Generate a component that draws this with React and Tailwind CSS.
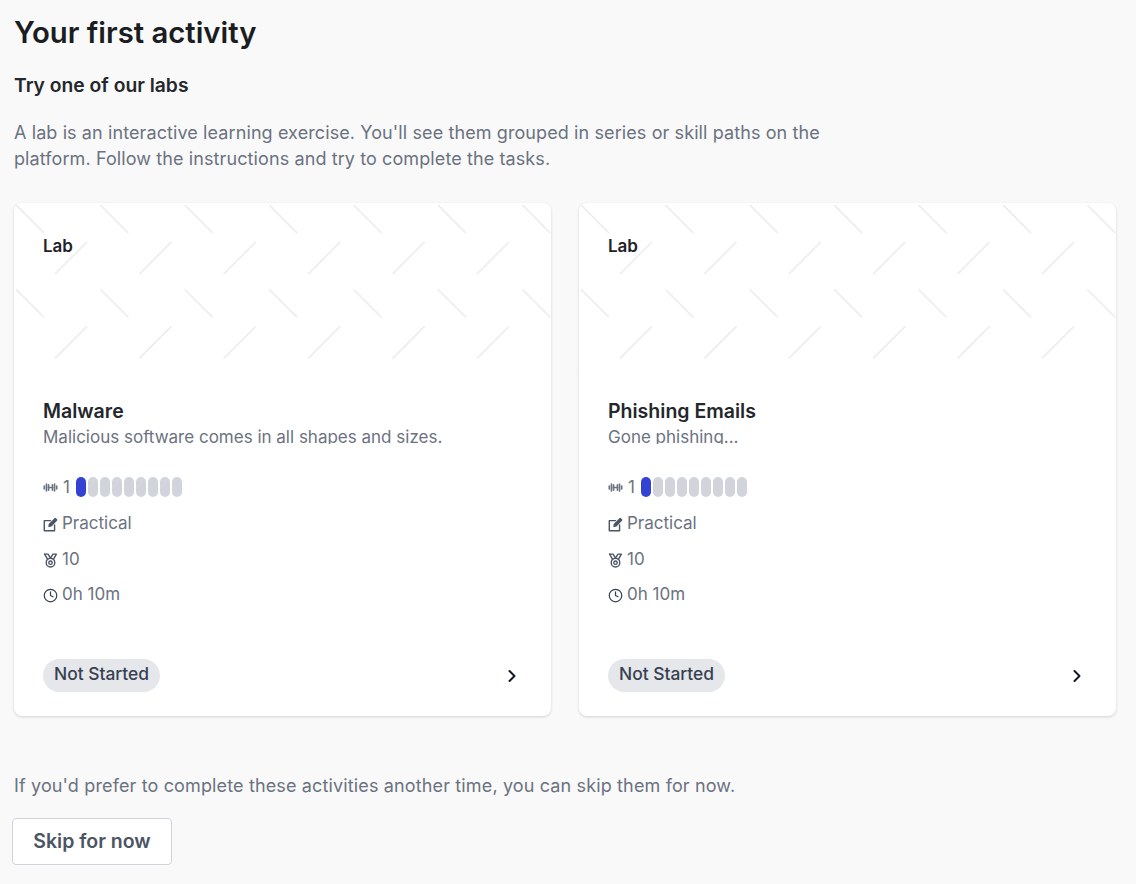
import React from 'react';
import { ChevronRight, Clock } from 'lucide-react';

const labs = [
  { id: 1, titulo: 'Malware', texto: 'Malicious software comes in all shapes and sizes.' },
  { id: 2, titulo: 'Phishing Emails', texto: 'Gone phishing...' },
];

// fondo de rayitas de la parte de arriba de la tarjeta
function Rayas({ id }) {
  return (
    <svg className="absolute left-0 top-0 h-[170px] w-full" aria-hidden="true">
      <defs>
        <pattern id={id} x="0" y="0" width="84.4" height="84.4" patternUnits="userSpaceOnUse">
          <path d="M2 2 L30 30" stroke="#e8eaed" strokeWidth="1.6" fill="none" />
          <path d="M41 71 L73 39" stroke="#e8eaed" strokeWidth="1.6" fill="none" />
        </pattern>
      </defs>
      <rect width="100%" height="170" fill={`url(#${id})`} />
    </svg>
  );
}

function IconoPesa() {
  return (
    <svg width="15" height="15" viewBox="0 0 14 14" fill="none" stroke="#6b7280" strokeWidth="1.5" strokeLinecap="round">
      <path d="M5 7h4" />
      <path d="M1.2 5.6v2.8M3.2 3.8v6.4M5.2 4.4v5.2M8.8 4.4v5.2M10.8 3.8v6.4M12.8 5.6v2.8" />
    </svg>
  );
}

function IconoEditar() {
  return (
    <svg width="15" height="15" viewBox="0 0 14 14" fill="none" stroke="#4b5563" strokeWidth="1.3" strokeLinecap="round" strokeLinejoin="round">
      <path d="M7 3.4H1.2v9.4h9.6V7.5" />
      <path d="M5.6 8.8l.4-2L11.4 1.4l1.4 1.4L7.5 8.3z" fill="#4b5563" />
    </svg>
  );
}

function IconoMedalla() {
  return (
    <svg width="15" height="15" viewBox="0 0 14 14" fill="none" stroke="#4b5563" strokeWidth="1.3" strokeLinecap="round" strokeLinejoin="round">
      <path d="M1.5 1h3.2L7 4.8 9.3 1h3.2L9.7 6" />
      <path d="M4.3 6L1.5 1" />
      <circle cx="7" cy="9" r="4" />
      <circle cx="7" cy="9" r="1.6" />
    </svg>
  );
}

function Tarjeta({ lab }) {
  return (
    <div className="relative flex h-[513px] flex-col overflow-hidden rounded-lg bg-white px-[29px] pb-[24px] shadow-[0_1px_3px_rgba(0,0,0,0.16)]">
      <Rayas id={`rayas-${lab.id}`} />
      <span className="relative mt-[33px] text-[17px] leading-5 font-semibold text-[#1f2328]">Lab</span>

      <h3 className="relative mt-[142px] text-[19.5px] leading-[26px] font-semibold text-[#24272b]">{lab.titulo}</h3>
      {/* la descripcion queda cortada por abajo como en la pantalla original */}
      <div className="mt-[3px] h-[17px] overflow-hidden">
        <p className="text-[17px] leading-[20px] text-[#6b7280]">{lab.texto}</p>
      </div>

      <div className="mt-[33px] flex h-5 items-center gap-[5px] text-[17px] text-[#6b7280]">
        <IconoPesa />
        <span className="mr-[1px] leading-5">1</span>
        <div className="flex gap-[2px]">
          <span className="h-5 w-[10px] rounded-full bg-[#3342d2]" />
          {[1, 2, 3, 4, 5, 6, 7, 8].map((n) => (
            <span key={n} className="h-5 w-[10px] rounded-full bg-[#d1d5db]" />
          ))}
        </div>
      </div>
      <div className="mt-[17px] flex h-5 items-center gap-[4px] text-[17px] text-[#6b7280]">
        <IconoEditar />
        <span>Practical</span>
      </div>
      <div className="mt-[16px] flex h-5 items-center gap-[4px] text-[17px] text-[#6b7280]">
        <IconoMedalla />
        <span>10</span>
      </div>
      <div className="mt-[15px] flex h-5 items-center gap-[4px] text-[17px] text-[#6b7280]">
        <Clock size={15} color="#374151" strokeWidth={2} />
        <span>0h 10m</span>
      </div>

      <div className="mt-auto flex items-center justify-between">
        <span className="rounded-full bg-[#e5e7eb] px-[11px] pt-[4px] pb-[8px] text-[17.4px] leading-[21px] font-medium text-[#374151]">Not Started</span>
        <ChevronRight size={20} color="#111827" strokeWidth={2.4} className="mt-[1px]" />
      </div>
    </div>
  );
}

export default function App() {
  return (
    <div className="min-h-[884px] bg-[#f9f9fa] pl-[14px] pr-[20px] pt-[15px] font-['Inter',sans-serif]">
      <h1 className="text-[29.3px] leading-9 font-semibold text-[#1a1d21]">Your first activity</h1>
      <h2 className="mt-[21px] text-[19.3px] leading-[26px] font-semibold text-[#24272b]">Try one of our labs</h2>
      <p className="mt-[22px] w-[840px] text-[18px] leading-[26px] tracking-[0.1px] text-[#6b7280]">
        A lab is an interactive learning exercise. You'll see them grouped in series or skill paths on the platform. Follow the instructions and try to complete the tasks.
      </p>

      <div className="mt-[31px] grid grid-cols-2 gap-[28px]">
        {labs.map((lab) => (
          <Tarjeta key={lab.id} lab={lab} />
        ))}
      </div>

      <p className="mt-[58px] text-[18px] leading-6 tracking-[0.14px] text-[#6b7280]">
        If you'd prefer to complete these activities another time, you can skip them for now.
      </p>
      <button className="ml-[-2px] mt-[20px] h-[47px] w-[160px] rounded border border-[#d1d5db] bg-white text-[19.5px] font-semibold text-[#4b5563]">
        Skip for now
      </button>
    </div>
  );
}
